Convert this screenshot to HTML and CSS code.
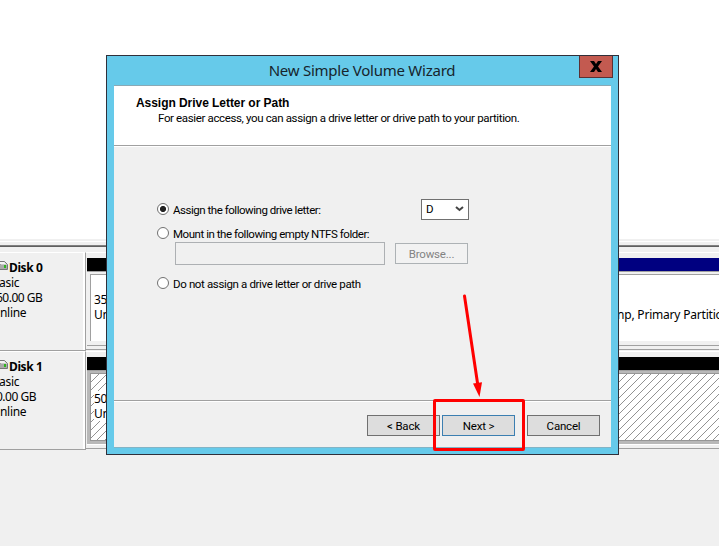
FILE: index.html
```
<!DOCTYPE html>
<html lang="en">
<head>
<meta charset="utf-8">
<title>New Simple Volume Wizard</title>
<link rel="stylesheet" href="styles.css">
</head>
<body>
<main class="desktop">
  <div class="volume-list"></div>
  <div class="splitter"></div>
  <section class="disk">
    <div class="disk-info">
      <div class="disk-name"><svg class="drive" width="9" height="12" viewBox="0 0 9 12"><path d="M0 1.5h4.5l3 3v5H0z" fill="#c9c9c9" stroke="#777"/><path d="M0 2h4l2 2H0z" fill="#f4f4f4"/><path d="M0 5h7v4H0z" fill="#aaa"/><path d="M4 5h2v3H4z" fill="#2fb51d"/></svg><b>Disk 0</b></div>
      <div>asic</div><div class="size">60.00 GB</div><div>nline</div>
    </div>
    <div class="disk-map">
      <div class="bar"><i class="bar-left"></i><i class="bar-primary"></i></div>
      <div class="parts"><div class="part part-first"><p>35</p><p>Un</p></div><div class="part part-main"><p>&nbsp;</p><p>np, Primary Partitio</p></div></div>
    </div>
  </section>
  <section class="disk">
    <div class="disk-info">
      <div class="disk-name"><svg class="drive" width="9" height="12" viewBox="0 0 9 12"><path d="M0 1.5h4.5l3 3v5H0z" fill="#c9c9c9" stroke="#777"/><path d="M0 2h4l2 2H0z" fill="#f4f4f4"/><path d="M0 5h7v4H0z" fill="#aaa"/><path d="M4 5h2v3H4z" fill="#2fb51d"/></svg><b>Disk 1</b></div>
      <div>asic</div><div class="size">0.00 GB</div><div>nline</div>
    </div>
    <div class="disk-map">
      <div class="bar"></div>
      <div class="selected">
        <svg class="hatch" width="640" height="66"><defs><pattern id="hatch" width="8" height="8" patternUnits="userSpaceOnUse"><path d="M7 0h1v1h-1zM6 1h1v1h-1zM5 2h1v1h-1zM4 3h1v1h-1zM3 4h1v1h-1zM2 5h1v1h-1zM1 6h1v1h-1zM0 7h1v1h-1z" fill="#929292"/></pattern></defs><rect width="640" height="66" fill="url(#hatch)"/></svg>
        <div class="selected-text"><p>50</p><p>Un</p></div>
      </div>
    </div>
  </section>
</main>

<div class="window">
  <header class="titlebar">
    <span class="title">New Simple Volume Wizard</span>
    <button class="close" aria-label="Close"><svg width="12" height="11" viewBox="0 0 12 11"><path d="M0 0h4l2 3 2-3h4L8 5.5 12 11H8L6 8l-2 3H0l4-5.5z"/></svg></button>
  </header>
  <div class="client">
    <div class="heading">
      <h1>Assign Drive Letter or Path</h1>
      <p>For easier access, you can assign a drive letter or drive path to your partition.</p>
    </div>
    <div class="options">
      <div class="option"><i class="radio checked"></i><span class="t-letter">Assign the following drive letter:</span><div class="select"><span>D</span><svg width="9" height="6" viewBox="0 0 9 6"><path d="M1 1l3.5 3L8 1" fill="none" stroke="#444" stroke-width="2"/></svg></div></div>
      <div class="option mount"><i class="radio"></i><span class="t-mount">Mount in the following empty NTFS folder:</span></div>
      <div class="folder"><div class="field"></div><div class="button disabled"><span>Browse...</span></div></div>
      <div class="option"><i class="radio"></i><span>Do not assign a drive letter or drive path</span></div>
    </div>
    <footer class="actions">
      <div class="button"><span>&lt; Back</span></div>
      <div class="button default"><span>Next &gt;</span></div>
      <div class="button cancel"><span>Cancel</span></div>
    </footer>
  </div>
</div>

<svg class="annotation" width="719" height="546" viewBox="0 0 719 546">
  <rect x="434.5" y="400.5" width="89" height="49" rx=".5" fill="none" stroke="#f00" stroke-width="3"/>
  <path d="M464.5 296L477.8 385" stroke="#f00" stroke-width="3" stroke-linecap="round"/>
  <path d="M473 383.5L482 382.3 479.5 397z" fill="#f00"/>
</svg>
</body>
</html>
```
FILE: styles.css
```
* { box-sizing: border-box; }
body { margin: 0; width: 719px; height: 546px; overflow: hidden; background: #f0f0f0; color: #000; }
p, h1 { margin: 0; }
i { display: block; }
svg { display: block; }

.desktop { width: 719px; height: 546px; overflow: hidden; font: 12px/15px "Noto Sans", sans-serif; letter-spacing: -.3px; }
.volume-list { height: 239px; background: #fff; }
.splitter { height: 13px; background: linear-gradient(#f0f0f0 2px, #fff 2px 3px, #f0f0f0 3px 6px, #808080 6px 7px, #606060 7px 8px, #f0f0f0 8px); }
.disk { display: flex; height: 99px; }
.disk-info { flex: none; width: 86px; padding-top: 7px; border-right: 1px solid #a0a0a0; border-bottom: 1px solid #a0a0a0; border-top: 1px solid #fff; box-shadow: inset -2px 0 #fff; white-space: nowrap; }
.disk-name { display: flex; }
.disk-name b { letter-spacing: -.4px; }
.disk-info div:nth-child(2) { margin-left: -1px; }
.disk-info .size { margin-left: -4px; letter-spacing: -.5px; }
.disk + .disk .size { margin-left: -4px; }
.disk-map { flex: 1; min-width: 0; margin-bottom: 1px; padding: 5px 0 0 1px; border-top: 1px solid #fff; border-bottom: 1px solid #a0a0a0; }
.bar { display: flex; height: 14px; background: #000; border-bottom: 1px solid #a0a0a0; }
.bar-left { width: 500px; }
.bar-primary { flex: 1; background: #000080; }
.parts { display: flex; height: 74px; padding: 2px 0 4px 3px; border-bottom: 1px solid #a0a0a0; white-space: nowrap; }
.part { background: #fff; border-top: 1px solid #a0a0a0; padding-top: 17px; }
.part-first { width: 500px; border-left: 1px solid #a0a0a0; padding-left: 3px; }
.part-main { flex: 1; padding-left: 27px; overflow: hidden; letter-spacing: -.2px; }
.selected { height: 74px; padding: 2px 0 3px 3px; background: #b8b8b8; border-bottom: 1px solid #fff; position: relative; }
.hatch { background: #fff; border: 1px solid #969696; height: 68px; }
.selected-text { position: absolute; left: 7px; top: 20px; background: #fff; }

.window { position: absolute; left: 106px; top: 55px; width: 513px; height: 400px; padding: 0 7px; border: 1px solid #30303a; background: #66caea; font: 11.5px/14px Roboto, "Liberation Sans", sans-serif; letter-spacing: -.36px; white-space: nowrap; }
.titlebar { display: flex; justify-content: flex-end; height: 29px; }
.title { flex: 1; text-align: center; font: 15px/29px "Noto Sans", sans-serif; letter-spacing: -.25px; color: #17242c; margin-right: -31px; }
.close { display: flex; justify-content: center; align-items: center; width: 34px; height: 22px; margin-right: -2px; padding: 0 0 1px; border: 1px solid #5b3033; border-top: 0; background: #c35a50; }
.client { height: 363px; display: flex; flex-direction: column; background: #f0f0f0; border-top: 1px solid #8aa9b5; border-bottom: 1px solid #82b4c6; }
.heading { height: 61px; padding: 9px 22px 0; background: #fff; border-bottom: 1px solid #fff; box-shadow: inset 0 -1px #a0a0a0; }
h1 { font: 700 12px/16px "Liberation Sans", sans-serif; letter-spacing: -.05px; }
.heading p { padding-left: 22px; }
.options { height: 253px; padding: 51px 0 0 43px; }
.option { display: flex; align-items: center; height: 22px; gap: 4px; }
.option > span { padding-top: 1px; }
.t-letter { letter-spacing: -.47px; }
.t-mount { letter-spacing: -.46px; }
.radio { width: 12px; height: 12px; border: 1px solid #707070; border-radius: 50%; background: #fff; }
.checked { background: radial-gradient(circle, #222 2.7px, #fff 3.4px); }
.select { display: flex; justify-content: space-between; align-items: center; width: 48px; height: 21px; margin-left: auto; margin-right: 142px; padding: 0 4px; border: 1px solid #707070; background: #fff; }
.mount { margin-top: 2px; }
.folder { display: flex; gap: 10px; padding-left: 18px; margin: -2px 0 7px; }
.field { width: 210px; height: 23px; border: 1px solid #adb0b3; }
.button { display: flex; align-items: center; justify-content: center; width: 73px; height: 21px; padding-top: 1px; border: 1px solid #707070; background: #ddd; letter-spacing: -.2px; }
.disabled { margin-top: 1px; border-color: #adb2b5; background: #f2f2f2; color: #838383; }
.default { border-color: #3c7fb1; }
.cancel { margin-left: 10px; }
.actions { display: flex; gap: 2px; flex: 1; padding: 14px 0 0 253px; border-top: 1px solid #a0a0a0; box-shadow: inset 0 1px #fff; }
.annotation { position: absolute; left: 0; top: 0; pointer-events: none; }
```
